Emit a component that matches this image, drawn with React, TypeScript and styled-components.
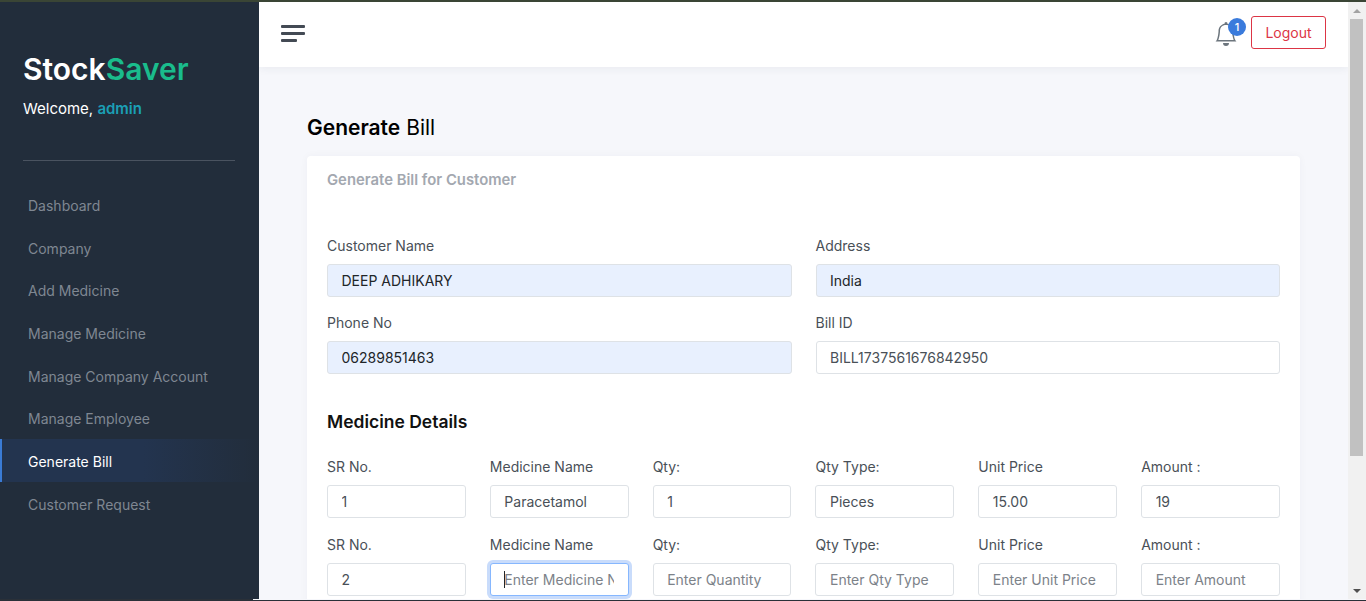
import styled, { createGlobalStyle } from 'styled-components'

const GlobalStyle = createGlobalStyle`
  html, body {
    margin: 0;
    height: 100%;
    overflow: hidden;
    background: #f6f7fb;
  }
  * {
    box-sizing: border-box;
  }
  body {
    font-family: 'Inter', 'Liberation Sans', sans-serif;
    font-size: 14px;
  }
`

const Screen = styled.div`
  display: flex;
  flex-direction: column;
  height: 601px;
  overflow: hidden;
`

const TopEdge = styled.div`
  flex: none;
  height: 2px;
  background: #3a4535;
`

const BottomEdge = styled.div`
  flex: none;
  height: 2px;
  background: linear-gradient(90deg, #2a3038 253px, #f6f7fb 253px);
  border-bottom: 1px solid #2a3038;
`

const Frame = styled.div`
  flex: 1;
  min-height: 0;
  display: flex;
`

const Sidebar = styled.aside`
  flex: none;
  width: 259px;
  background: #222d3b;
  padding-top: 48px;
`

const Brand = styled.div`
  padding: 0 23px;
  font-size: 30px;
  line-height: 39px;
  font-weight: 600;
  color: #fff;
  span {
    color: #1abc8c;
  }
`

const Welcome = styled.div`
  padding: 0 23px;
  margin-top: 11px;
  font-size: 15px;
  line-height: 18px;
  color: #fff;
  span {
    color: #1b9fb5;
    font-weight: 600;
  }
`

const Divider = styled.hr`
  margin: 42px 24px 22px 23px;
  border: 0;
  border-top: 1px solid #4a5360;
`

const Nav = styled.nav`
  display: flex;
  flex-direction: column;
`

const NavItem = styled.a<{ $active?: boolean }>`
  display: block;
  height: 42.7px;
  line-height: 46px;
  padding-left: ${(p) => (p.$active ? '26px' : '28px')};
  font-size: 14px;
  color: ${(p) => (p.$active ? '#fff' : '#7f8792')};
  border-left: ${(p) => (p.$active ? '2px solid #3a7bd5' : '0')};
  background: ${(p) =>
    p.$active ? 'linear-gradient(90deg, #23344f 0%, #23344f 55%, #222d3b 100%)' : 'transparent'};
`

const Main = styled.main`
  flex: 1;
  min-width: 0;
  overflow: hidden;
`

const Header = styled.header`
  height: 65px;
  background: #fff;
  box-shadow: 0 2px 8px rgba(40, 50, 70, 0.06);
  display: flex;
  align-items: center;
  justify-content: space-between;
  padding: 0 22px 4px 22px;
`

const Burger = styled.button`
  display: flex;
  flex-direction: column;
  gap: 4px;
  width: 24px;
  margin-top: 2px;
  padding: 0;
  border: 0;
  background: none;
  i {
    display: block;
    height: 3px;
    background: #434a54;
    border-radius: 1px;
  }
  i:last-child {
    width: 16px;
  }
`

const HeaderActions = styled.div`
  display: flex;
  align-items: center;
  gap: 13px;
`

const BellWrap = styled.div`
  position: relative;
  width: 24px;
  height: 28px;
  color: #6c757d;
  svg {
    display: block;
    margin-top: 2px;
  }
`

const Badge = styled.span`
  position: absolute;
  top: -1px;
  left: 14px;
  width: 18px;
  height: 18px;
  border-radius: 50%;
  background: #3a7bdc;
  color: #fff;
  font-size: 11px;
  font-weight: 500;
  line-height: 18px;
  text-align: center;
`

const LogoutButton = styled.button`
  width: 75px;
  height: 33px;
  border: 1px solid #dc3545;
  border-radius: 3px;
  background: #fff;
  color: #dc3545;
  font: inherit;
  font-size: 14px;
`

const Content = styled.div`
  padding: 48px 48px 0;
`

const PageTitle = styled.h1`
  margin: 0 0 15px;
  font-size: 21px;
  line-height: 26px;
  font-weight: 400;
  color: #000;
  b {
    font-weight: 600;
  }
`

const Card = styled.section`
  background: #fff;
  border-radius: 4px;
  padding: 16px 20px 40px;
  box-shadow: 0 0 8px rgba(40, 50, 70, 0.04);
`

const CardTitle = styled.h2`
  margin: 0 0 48px;
  font-size: 14.85px;
  line-height: 17px;
  font-weight: 600;
  color: #a3a8b0;
`

const TwoColumns = styled.div`
  display: grid;
  grid-template-columns: repeat(2, 1fr);
  column-gap: 24px;
  row-gap: 17px;
`

const SixColumns = styled.div`
  display: grid;
  grid-template-columns: repeat(6, 1fr);
  column-gap: 24px;
  row-gap: 18px;
`

const Field = styled.div`
  display: flex;
  flex-direction: column;
  gap: 10px;
`

const Label = styled.label`
  font-size: 14px;
  line-height: 17px;
  color: #495057;
`

const InputWrap = styled.div`
  position: relative;
`

const Caret = styled.span`
  position: absolute;
  top: 8px;
  left: 14px;
  width: 1px;
  height: 17px;
  background: #212529;
`

const Input = styled.input<{ $filled?: boolean }>`
  display: block;
  width: 100%;
  height: 33px;
  padding: 0 13.5px;
  border: 1px solid #dee2e6;
  border-radius: 3px;
  background: ${(p) => (p.$filled ? '#e8f0fe' : '#fff')};
  color: ${(p) => (p.$filled ? '#212529' : '#495057')};
  caret-color: transparent;
  font: inherit;
  font-size: 14px;
  outline: none;
  &::placeholder {
    color: #7c8289;
    opacity: 1;
  }
  &:focus {
    border-color: #86b7fe;
    box-shadow: 0 0 0 3px #c9dcfb;
  }
`

const SectionTitle = styled.h3`
  margin: 37px 0 26px;
  font-size: 17.5px;
  line-height: 21px;
  font-weight: 600;
  color: #111;
`

const Scrollbar = styled.div`
  flex: none;
  width: 18px;
  padding: 0 3px 0 2px;
  display: flex;
  flex-direction: column;
  background: #f1f1f1;
`

const ScrollArrow = styled.div<{ $down?: boolean }>`
  flex: none;
  height: 17px;
  display: flex;
  align-items: center;
  justify-content: center;
  &::before {
    content: '';
    border-left: 4px solid transparent;
    border-right: 4px solid transparent;
    ${(p) => (p.$down ? 'border-top: 4px solid #505050;' : 'border-bottom: 4px solid #a3a3a3;')}
  }
`

const ScrollThumb = styled.div`
  flex: none;
  height: 437px;
  background: #c1c1c1;
`

const ScrollTrack = styled.div`
  flex: 1;
`

const navItems = [
  'Dashboard',
  'Company',
  'Add Medicine',
  'Manage Medicine',
  'Manage Company Account',
  'Manage Employee',
  'Generate Bill',
  'Customer Request',
]

const App = () => {
  return (
    <>
      <GlobalStyle />
      <Screen>
        <TopEdge />
        <Frame>
          <Sidebar>
            <Brand>
              Stock<span>Saver</span>
            </Brand>
            <Welcome>
              Welcome, <span>admin</span>
            </Welcome>
            <Divider />
            <Nav>
              {navItems.map((item) => (
                <NavItem key={item} $active={item === 'Generate Bill'}>
                  {item}
                </NavItem>
              ))}
            </Nav>
          </Sidebar>
          <Main>
            <Header>
              <Burger aria-label="Menu">
                <i />
                <i />
                <i />
              </Burger>
              <HeaderActions>
                <BellWrap>
                  <svg width="24" height="26" viewBox="0 0 16 16" fill="currentColor">
                    <path d="M8 16a2 2 0 0 0 2-2H6a2 2 0 0 0 2 2zM8 1.918l-.797.161A4.002 4.002 0 0 0 4 6c0 .628-.134 2.197-.459 3.742-.16.767-.376 1.566-.663 2.258h10.244c-.287-.692-.502-1.49-.663-2.258C12.134 8.197 12 6.628 12 6a4.002 4.002 0 0 0-3.203-3.92L8 1.917zM14.22 12c.223.447.481.801.78 1H1c.299-.199.557-.553.78-1C2.68 10.2 3 6.88 3 6c0-2.42 1.72-4.44 4.005-4.901a1 1 0 1 1 1.99 0A5.002 5.002 0 0 1 13 6c0 .88.32 4.2 1.22 6z" />
                  </svg>
                  <Badge>1</Badge>
                </BellWrap>
                <LogoutButton>Logout</LogoutButton>
              </HeaderActions>
            </Header>
            <Content>
              <PageTitle>
                <b>Generate</b> Bill
              </PageTitle>
              <Card>
                <CardTitle>Generate Bill for Customer</CardTitle>
                <TwoColumns>
                  <Field>
                    <Label>Customer Name</Label>
                    <Input $filled defaultValue="DEEP ADHIKARY" />
                  </Field>
                  <Field>
                    <Label>Address</Label>
                    <Input $filled defaultValue="India" />
                  </Field>
                  <Field>
                    <Label>Phone No</Label>
                    <Input $filled defaultValue="06289851463" />
                  </Field>
                  <Field>
                    <Label>Bill ID</Label>
                    <Input defaultValue="BILL1737561676842950" />
                  </Field>
                </TwoColumns>
                <SectionTitle>Medicine Details</SectionTitle>
                <SixColumns>
                  <Field>
                    <Label>SR No.</Label>
                    <Input defaultValue="1" />
                  </Field>
                  <Field>
                    <Label>Medicine Name</Label>
                    <Input defaultValue="Paracetamol" />
                  </Field>
                  <Field>
                    <Label>Qty:</Label>
                    <Input defaultValue="1" />
                  </Field>
                  <Field>
                    <Label>Qty Type:</Label>
                    <Input defaultValue="Pieces" />
                  </Field>
                  <Field>
                    <Label>Unit Price</Label>
                    <Input defaultValue="15.00" />
                  </Field>
                  <Field>
                    <Label>Amount :</Label>
                    <Input defaultValue="19" />
                  </Field>
                  <Field>
                    <Label>SR No.</Label>
                    <Input defaultValue="2" />
                  </Field>
                  <Field>
                    <Label>Medicine Name</Label>
                    <InputWrap>
                      <Input autoFocus placeholder="Enter Medicine Name" />
                      <Caret />
                    </InputWrap>
                  </Field>
                  <Field>
                    <Label>Qty:</Label>
                    <Input placeholder="Enter Quantity" />
                  </Field>
                  <Field>
                    <Label>Qty Type:</Label>
                    <Input placeholder="Enter Qty Type" />
                  </Field>
                  <Field>
                    <Label>Unit Price</Label>
                    <Input placeholder="Enter Unit Price" />
                  </Field>
                  <Field>
                    <Label>Amount :</Label>
                    <Input placeholder="Enter Amount" />
                  </Field>
                </SixColumns>
              </Card>
            </Content>
          </Main>
          <Scrollbar>
            <ScrollArrow />
            <ScrollThumb />
            <ScrollTrack />
            <ScrollArrow $down />
          </Scrollbar>
        </Frame>
        <BottomEdge />
      </Screen>
    </>
  )
}

export default App
